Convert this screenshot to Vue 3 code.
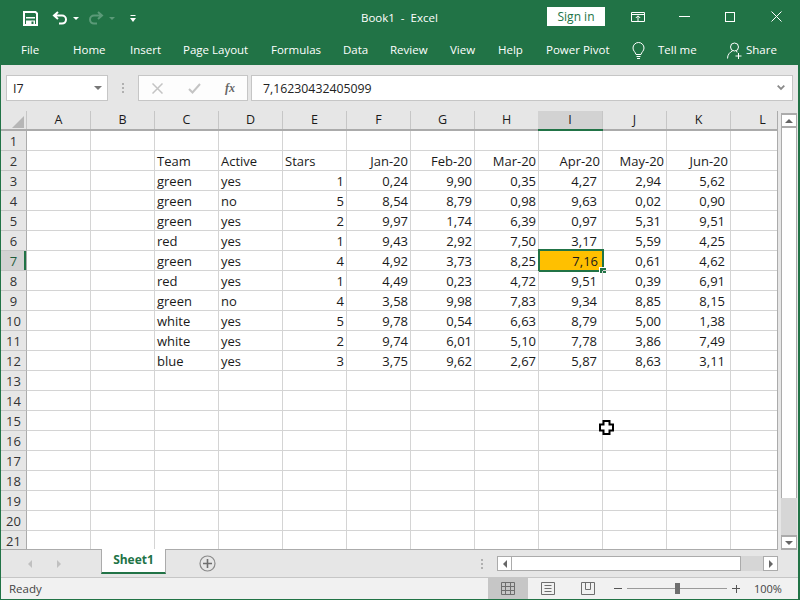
<script setup>
const cols = ['A','B','C','D','E','F','G','H','I','J','K','L']
const rowsData = {
  2: ['', '', 'Team', 'Active', 'Stars', 'Jan-20', 'Feb-20', 'Mar-20', 'Apr-20', 'May-20', 'Jun-20', ''],
  3: ['', '', 'green', 'yes', '1', '0,24', '9,90', '0,35', '4,27', '2,94', '5,62', ''],
  4: ['', '', 'green', 'no', '5', '8,54', '8,79', '0,98', '9,63', '0,02', '0,90', ''],
  5: ['', '', 'green', 'yes', '2', '9,97', '1,74', '6,39', '0,97', '5,31', '9,51', ''],
  6: ['', '', 'red', 'yes', '1', '9,43', '2,92', '7,50', '3,17', '5,59', '4,25', ''],
  7: ['', '', 'green', 'yes', '4', '4,92', '3,73', '8,25', '7,16', '0,61', '4,62', ''],
  8: ['', '', 'red', 'yes', '1', '4,49', '0,23', '4,72', '9,51', '0,39', '6,91', ''],
  9: ['', '', 'green', 'no', '4', '3,58', '9,98', '7,83', '9,34', '8,85', '8,15', ''],
  10: ['', '', 'white', 'yes', '5', '9,78', '0,54', '6,63', '8,79', '5,00', '1,38', ''],
  11: ['', '', 'white', 'yes', '2', '9,74', '6,01', '5,10', '7,78', '3,86', '7,49', ''],
  12: ['', '', 'blue', 'yes', '3', '3,75', '9,62', '2,67', '5,87', '8,63', '3,11', '']
}
const rows = Array.from({ length: 21 }, (_, i) => {
  const n = i + 1
  return { n, cells: rowsData[n] || Array(12).fill('') }
})
const tabs = ['Home', 'Insert', 'Page Layout', 'Formulas', 'Data', 'Review', 'View', 'Help', 'Power Pivot']
const cellClass = (n, j) => ({
  l: j === 2 || j === 3 || (n === 2 && j === 4),
  ind: n > 2 && j >= 8 && j <= 10
})
</script>

<template>
  <div class="win">
    <header class="title">
      <div class="qat">
        <svg class="i-save" width="15" height="15" viewBox="0 0 15 15"><path d="M1 1h11.500L14 2.500V14H1z" fill="none" stroke="#fff" stroke-width="2"/><rect x="3" y="6" width="9" height="1.500" fill="#fff"/><rect x="3" y="9.500" width="9" height="4.500" fill="#fff"/><rect x="8.500" y="10.500" width="2" height="2.500" fill="#217346"/></svg>
        <svg class="i-undo" width="16" height="14" viewBox="0 0 16 14"><path d="M6 1 2 4.600 6 8M2.400 4.600H10a4 4 0 0 1 0 8H7" fill="none" stroke="#fff" stroke-width="2"/></svg>
        <span class="caret"></span>
        <svg class="i-redo" width="16" height="14" viewBox="0 0 16 14"><path d="M10 1l4 3.600L10 8M13.600 4.600H6a4 4 0 0 0 0 8h3" fill="none" stroke="#5b9a78" stroke-width="2"/></svg>
        <span class="caret dim"></span>
        <svg class="i-more" width="7" height="8" viewBox="0 0 7 8"><rect x="0.500" width="5" height="1" fill="#fff"/><path d="M0 3h6L3 7z" fill="#fff"/></svg>
      </div>
      <div class="doc">Book1&nbsp; -&nbsp; Excel</div>
      <button class="signin">Sign in</button>
      <svg class="i-disp" width="14" height="10" viewBox="0 0 14 10"><path d="M.5.5h13v9H.5zM.5 2.500h13" fill="none" stroke="#fff"/><path d="M7 9V4M4.800 6 7 3.800 9.200 6" fill="none" stroke="#fff"/></svg>
      <svg class="i-min" width="11" height="1" viewBox="0 0 11 1"><rect width="11" height="1" fill="#fff"/></svg>
      <svg class="i-max" width="10" height="10" viewBox="0 0 10 10"><rect x=".5" y=".5" width="9" height="9" fill="none" stroke="#fff"/></svg>
      <svg class="i-close" width="11" height="11" viewBox="0 0 11 11"><path d="M.5.5l10 10M10.500.5l-10 10" stroke="#fff" fill="none"/></svg>
    </header>

    <nav class="ribbon">
      <span class="tab file">File</span>
      <span v-for="t in tabs" :key="t" class="tab">{{ t }}</span>
      <svg class="i-bulb" width="13" height="18" viewBox="0 0 13 18"><path d="M4 12.500C3.500 10 1 9 1 6a5.500 5.500 0 0 1 11 0c0 3-2.500 4-3 6.500zM4.500 14.500h4M5 16.500h3" fill="none" stroke="#fff"/></svg>
      <span class="tab tell">Tell me</span>
      <svg class="i-user" width="16" height="18" viewBox="0 0 16 18"><circle cx="7.500" cy="5" r="4" fill="none" stroke="#fff"/><path d="M.5 16.500c0-4 2.500-6.500 5-7.500M9 9.500l1.500.5M11.500 11v6M8.500 14h6" fill="none" stroke="#fff"/></svg>
      <span class="tab share">Share</span>
    </nav>

    <section class="fbar">
      <div class="namebox"><span>I7</span><i class="tri"></i></div>
      <div class="vdots"><b></b><b></b><b></b></div>
      <div class="fbtns">
        <svg width="11" height="11" viewBox="0 0 11 11"><path d="M.5.5l10 10M10.500.5l-10 10" stroke="#c4c4c4" stroke-width="1.500" fill="none"/></svg>
        <svg width="13" height="11" viewBox="0 0 13 11"><path d="M1 6l3.500 3.500L12 1" stroke="#c4c4c4" stroke-width="2" fill="none"/></svg>
        <span class="fx">fx</span>
      </div>
      <div class="finput"><span>7,16230432405099</span>
        <svg width="8" height="6" viewBox="0 0 8 6"><path d="M.7.7 4 4l3.300-3.300" stroke="#8a8a8a" stroke-width="1.800" fill="none"/></svg>
      </div>
    </section>

    <section class="sheetwrap">
      <div class="sheet">
        <div class="hdr">
          <div class="corner"><i></i></div>
          <div v-for="c in cols" :key="c" class="ch" :class="{ sel: c === 'I' }">{{ c }}</div>
        </div>
        <div class="body">
          <div v-for="r in rows" :key="r.n" class="row">
            <div class="rh" :class="{ sel: r.n === 7 }">{{ r.n }}</div>
            <div v-for="(v, j) in r.cells" :key="j" class="cell" :class="cellClass(r.n, j)">
              <template v-if="!(r.n === 7 && j === 8)">{{ v }}</template>
              <div v-else class="active"><span>{{ v }}</span><i></i></div>
            </div>
          </div>
        </div>
      </div>
      <aside class="vscroll">
        <div class="sbtn"><i class="up"></i></div>
        <div class="vthumb"></div>
        <div class="vtrack"></div>
        <div class="sbtn"><i class="down"></i></div>
      </aside>
      <svg class="cursor" width="15" height="15" viewBox="0 0 15 15"><path d="M4.500 1h6v3.500H14v6h-3.500V14h-6v-3.500H1v-6h3.500z" fill="#fff" stroke="#000" stroke-width="2"/></svg>
    </section>

    <section class="tabbar">
      <div class="nav"><i class="tl"></i><i class="tr"></i></div>
      <div class="sheet1">Sheet1</div>
      <svg class="plus" width="17" height="17" viewBox="0 0 17 17"><circle cx="8.500" cy="8.500" r="7.500" fill="none" stroke="#8a8a8a" stroke-width="1.200"/><path d="M8.500 4v9M4 8.500h9" stroke="#6e6e6e" stroke-width="1.600"/></svg>
      <div class="sp"></div>
      <div class="vdots h"><b></b><b></b><b></b></div>
      <div class="hscroll">
        <div class="hb"><i class="tl2"></i></div>
        <div class="hthumb"></div>
        <div class="htrack"></div>
        <div class="hb"><i class="tr2"></i></div>
      </div>
    </section>

    <footer class="status">
      <span class="ready">Ready</span>
      <div class="views">
        <div class="v on"><svg width="14" height="13" viewBox="0 0 14 13"><path d="M.5.5h13v12H.5zM.5 4.500h13M.5 8.500h13M4.500.5v12M9.500.5v12" fill="none" stroke="#6e6e6e"/></svg></div>
        <div class="v"><svg width="14" height="13" viewBox="0 0 14 13"><path d="M.5.5h13v12H.5z" fill="none" stroke="#6e6e6e"/><path d="M3.500 3.500h7M3.500 6.500h7M3.500 9.500h7" stroke="#6e6e6e"/></svg></div>
        <div class="v"><svg width="14" height="13" viewBox="0 0 14 13"><path d="M.5.5h13v12H.5zM4.500.5v7h5v-7" fill="none" stroke="#6e6e6e"/></svg></div>
      </div>
      <div class="zoom">
        <span class="zm"></span>
        <div class="slider"><i></i></div>
        <span class="zp"></span>
        <span class="pct">100%</span>
      </div>
    </footer>
  </div>
</template>

<style scoped>
.win { width: 800px; height: 600px; box-sizing: border-box; display: flex; flex-direction: column; background: #e6e6e6; border-left: 1px solid #217346; border-right: 2px solid #217346; border-bottom: 1px solid #217346; font-family: "Open Sans", "Noto Sans", sans-serif; color: #222; overflow: hidden; position: relative; }
.title { height: 36px; flex: none; background: #217346; margin: 0 -2px 0 -1px; display: flex; align-items: center; color: #fff; font-size: 11.5px; position: relative; }
.qat { display: flex; align-items: center; margin-left: 23px; }
.i-undo { margin-left: 14px; }
.caret { width: 0; height: 0; border: 3px solid transparent; border-top: 3px solid #fff; border-bottom: 0; margin-left: 5px; }
.caret.dim { border-top-color: #5b9a78; }
.i-redo { margin-left: 9px; }
.i-more { margin-left: 15px; margin-top: 1px; }
.doc { position: absolute; left: 361px; top: 10px; line-height: 16px; }
.signin { margin-left: auto; width: 58px; height: 19px; border: 0; background: #fff; color: #217346; font: 12px/19px "Open Sans", sans-serif; padding: 0; margin-top: -3px; }
.i-disp { margin-left: 26px; margin-top: -3px; }
.i-min { margin-left: 34px; margin-top: -4px; }
.i-max { margin-left: 35px; margin-top: -3px; }
.i-close { margin-left: 36px; margin-right: 18px; margin-top: -3px; }
.ribbon { height: 29px; flex: none; background: #217346; margin: 0 -2px 0 -1px; display: flex; align-items: center; color: #fff; font-size: 11.5px; box-sizing: border-box; padding-left: 21px; }
.tab { line-height: 26px; margin-bottom: 2px; position: relative; }
.tab:nth-of-type(1) { width: 52px; }
.tab:nth-of-type(2) { width: 57px; }
.tab:nth-of-type(3) { width: 53px; }
.tab:nth-of-type(4) { width: 88px; }
.tab:nth-of-type(5) { width: 72px; }
.tab:nth-of-type(6) { width: 47px; }
.tab:nth-of-type(7) { width: 60px; }
.tab:nth-of-type(8) { width: 48px; }
.tab:nth-of-type(9) { width: 48px; }
.tab:nth-of-type(10) { width: 86px; }
.i-bulb { margin-right: 13px; }
.tab.tell { width: 69px; }
.i-user { margin-right: 3px; }
.tab.share { width: 40px; }
.fbar { height: 46px; flex: none; display: flex; align-items: center; padding: 0 5px 0 5px; box-sizing: border-box; }
.namebox { width: 102px; height: 26px; box-sizing: border-box; background: #fff; border: 1px solid #c6c6c6; display: flex; align-items: center; justify-content: space-between; padding: 0 6px; font-size: 12.500px; }
.tri { width: 0; height: 0; border: 4px solid transparent; border-top: 4px solid #777; border-bottom: 0; margin-right: -1px; }
.vdots { display: flex; flex-direction: column; gap: 2px; margin: 0 14px; }
.vdots b { display: block; width: 2px; height: 2px; background: #b0b0b0; }
.fbtns { width: 110px; height: 26px; box-sizing: border-box; background: #fdfdfd; border: 1px solid #c6c6c6; display: flex; align-items: center; padding-left: 13px; gap: 25px; }
.fx { font: italic bold 12px "Liberation Serif", serif; color: #666; margin-left: -1px; }
.finput { flex: 1; height: 26px; box-sizing: border-box; background: #fff; border: 1px solid #c6c6c6; margin-left: 3px; display: flex; align-items: center; justify-content: space-between; padding: 0 7px 0 11px; font-size: 12.300px; }
.sheetwrap { height: 439px; flex: none; display: flex; position: relative; }
.sheet { width: 776px; flex: none; overflow: hidden; border-right: 1px solid #ababab; border-bottom: 1px solid #ababab; box-sizing: content-box; }
.hdr { display: flex; height: 20px; box-sizing: border-box; border-bottom: 2px solid #ababab; font-size: 12.500px; }
.corner { width: 25px; flex: none; border-right: 1px solid #c6c6c6; position: relative; }
.corner i { position: absolute; right: 2px; bottom: 1px; width: 0; height: 0; border-style: solid; border-width: 0 0 12px 12px; border-color: transparent transparent #b6b6b6 transparent; }
.ch { width: 63px; flex: none; border-right: 1px solid #c6c6c6; text-align: center; line-height: 18px; color: #1a1a1a; position: relative; }
.ch.sel { background: #d2d2d2; box-shadow: 0 2px 0 #217346; margin-left: -1px; width: 64px; }
.ch:last-child { border-right: 0; }
.body { height: 418px; overflow: hidden; background: #fff; }
.row { display: flex; height: 20px; }
.rh { width: 25px; flex: none; background: #e6e6e6; border-right: 1px solid #ababab; border-bottom: 1px solid #c6c6c6; height: 19px; text-align: center; font-size: 13px; line-height: 20px; color: #333; }
.rh.sel { background: #d2d2d2; box-shadow: inset -2px 0 0 #217346; color: #1f5c3a; }
.cell { flex: none; border-right: 1px solid #d4d4d4; border-bottom: 1px solid #d4d4d4; text-align: right; padding: 0 2px; box-sizing: border-box; width: 64px; height: 20px; font-size: 13px; line-height: 21px; color: #1a1a1a; position: relative; }
.cell.l { text-align: left; }
.cell.ind { padding-right: 5px; }
.active { position: absolute; left: -1px; top: -2px; width: 66px; height: 23px; box-sizing: border-box; border: 2px solid #217346; background: #ffc000; text-align: right; padding-right: 4px; line-height: 21px; }
.active i { position: absolute; right: -4px; bottom: -3px; width: 7px; height: 6px; background: #217346; border-left: 1px solid #fff; border-top: 1px solid #fff; box-sizing: border-box; }
.vscroll { width: 21px; flex: none; display: flex; flex-direction: column; padding: 2px 2px 0 3px; box-sizing: border-box; }
.sbtn { height: 15px; background: #fff; border: 1px solid #ababab; border-width: 2px 1px; box-sizing: border-box; display: flex; align-items: center; justify-content: center; flex: none; }
.vthumb { height: 370px; background: #fff; border: 1px solid #ababab; border-top: 0; border-bottom: 0; box-sizing: border-box; }
.vtrack { flex: 1; background: #d6d6d6; }
.up { border: 4px solid transparent; border-bottom: 4px solid #666; border-top: 0; }
.down { border: 4px solid transparent; border-top: 4px solid #666; border-bottom: 0; }
.cursor { position: absolute; left: 598px; top: 309px; }
.tabbar { height: 28px; flex: none; display: flex; align-items: center; box-sizing: border-box; border-bottom: 1px solid #c6c6c6; }
.nav { width: 100px; flex: none; display: flex; gap: 25px; padding-left: 27px; box-sizing: border-box; }
.tl { border: 4px solid transparent; border-right: 4px solid #c0c0c0; border-left: 0; }
.tr { border: 4px solid transparent; border-left: 4px solid #c0c0c0; border-right: 0; }
.sheet1 { width: 65px; height: 25px; align-self: flex-start; background: #fff; border-left: 1px solid #ababab; border-right: 1px solid #ababab; border-bottom: 2px solid #217346; box-sizing: border-box; text-align: center; color: #217346; font-weight: 700; font-size: 12px; line-height: 22px; margin-top: -1px; position: relative; }
.plus { margin-left: 33px; }
.sp { flex: 1; }
.vdots.h { margin: 0 14px 0 0; }
.hscroll { width: 281px; height: 15px; margin-right: 20px; display: flex; box-sizing: border-box; }
.hb { width: 15px; height: 15px; background: #fff; border: 1px solid #ababab; box-sizing: border-box; display: flex; align-items: center; justify-content: center; flex: none; }
.tl2 { border: 4px solid transparent; border-right: 4px solid #666; border-left: 0; }
.tr2 { border: 4px solid transparent; border-left: 4px solid #666; border-right: 0; }
.hthumb { width: 229px; flex: none; background: #fff; border: 1px solid #ababab; border-left: 0; box-sizing: border-box; }
.htrack { flex: 1; background: #d6d6d6; }
.status { flex: 1; min-height: 0; background: #f1f1f1; display: flex; align-items: stretch; font-size: 11.500px; color: #444; }
.ready { margin-left: 8px; line-height: 22px; width: 479px; flex: none; }
.views { display: flex; flex: none; }
.v { width: 40px; display: flex; align-items: center; justify-content: center; }
.v.on { background: #c6c6c6; }
.zoom { display: flex; align-items: center; margin-left: 6px; }
.zm { width: 8px; height: 1px; background: #555; }
.slider { width: 100px; height: 1px; background: #9a9a9a; margin: 0 5px; position: relative; }
.slider i { position: absolute; left: 48px; top: -5px; width: 5px; height: 11px; background: #6e6e6e; }
.zp { width: 8px; height: 8px; background: linear-gradient(#555,#555) center/8px 1px no-repeat, linear-gradient(#555,#555) center/1px 8px no-repeat; }
.pct { margin-left: 14px; font-size: 11px; }
</style>
